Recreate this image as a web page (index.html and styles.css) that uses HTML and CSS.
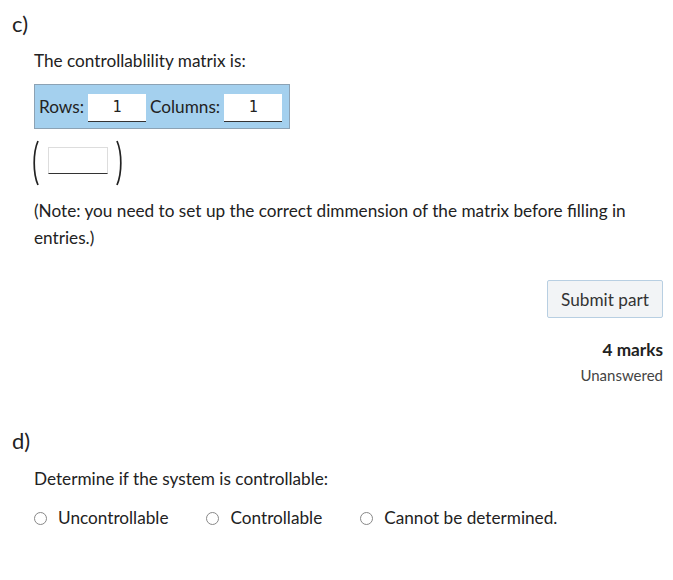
FILE: index.html
```html
<!DOCTYPE html>
<html>
<head>
<meta charset="utf-8">
<link rel="stylesheet" href="styles.css">
</head>
<body>
<section class="part">
  <h3 class="part-label">c)</h3>
  <div class="part-body">
    <p class="prompt">The controllablility matrix is:</p>
    <div class="dims">
      <span class="dim-label">Rows:</span>
      <input class="dim-input" type="text" value="1">
      <span class="dim-label">Columns:</span>
      <input class="dim-input" type="text" value="1">
    </div>
    <div class="matrix">
      <svg class="paren" width="8" height="46" viewBox="0 0 8 46"><path d="M6 1 C2.5 9 2.2 16 2.2 23 C2.2 30 2.5 37 6 45" fill="none" stroke="#222" stroke-width="1.7"/></svg>
      <input class="cell" type="text" value="">
      <svg class="paren" width="8" height="46" viewBox="0 0 8 46"><path d="M2 1 C5.5 9 5.8 16 5.8 23 C5.8 30 5.5 37 2 45" fill="none" stroke="#222" stroke-width="1.7"/></svg>
    </div>
    <p class="note">(Note: you need to set up the correct dimmension of the matrix before filling in entries.)</p>
  </div>
  <div class="submit-row">
    <button class="submit">Submit part</button>
    <div class="marks">4 marks</div>
    <div class="status">Unanswered</div>
  </div>
</section>
<section class="part part-d">
  <h3 class="part-label">d)</h3>
  <div class="part-body">
    <p class="prompt">Determine if the system is controllable:</p>
    <div class="choices">
      <label class="choice"><span class="radio"></span>Uncontrollable</label>
      <label class="choice"><span class="radio"></span>Controllable</label>
      <label class="choice"><span class="radio"></span>Cannot be determined.</label>
    </div>
  </div>
</section>
</body>
</html>
```

FILE: styles.css
```css
* { box-sizing: border-box; }
body {
  margin: 0;
  padding: 0 10px 0 12px;
  font-family: "Lato", "Liberation Sans", sans-serif;
  font-size: 17.2px;
  color: #222;
  background: #fff;
}
.part { display: flex; flex-direction: column; }
.part-label {
  margin: 11px 0 0 0;
  font-size: 22px;
  font-weight: 400;
  line-height: 26px;
}
.part-body { padding-left: 22px; }
.prompt { margin: 11px 0 0 0; line-height: 26px; }
.dims {
  margin-top: 10px;
  width: 256px;
  height: 45px;
  background: #a4d0ee;
  border: 1px solid #8ca2b4;
  display: flex;
  align-items: center;
  padding: 0 4px;
  gap: 4px;
}
.dim-input {
  width: 58px;
  height: 28px;
  margin-top: 2px;
  border: none;
  border-bottom: 1px solid #333;
  background: #fff;
  font-family: "DejaVu Sans Mono", monospace;
  font-size: 15px;
  text-align: center;
  padding: 0;
  color: #222;
}
.matrix {
  display: flex;
  align-items: center;
  height: 46px;
  margin-top: 11px;
}
.paren { display: block; }
.matrix .paren:first-child { margin-left: -2px; margin-right: 8px; }
.matrix .paren:last-child { margin-left: 7px; }
.cell {
  width: 60px;
  height: 27px;
  margin-bottom: 6px;
  border: 1px solid #ddd;
  border-bottom: 1px solid #333;
  background: #fff;
}
.note { margin: 11px 0 0 0; line-height: 27px; }
.submit-row {
  display: flex;
  flex-direction: column;
  align-items: flex-end;
  margin-top: 29px;
}
.submit {
  font-family: inherit;
  font-size: 17.2px;
  color: #333;
  width: 116px;
  height: 38px;
  background: #f2f4f6;
  border: 1px solid #b8cfe2;
  border-radius: 2px;
}
.marks { font-weight: 700; margin-top: 20px; line-height: 24px; }
.status { font-size: 15px; color: #444; margin-top: 3px; line-height: 20px; }
.part-d .part-label { margin-top: 43px; }
.part-d .prompt { margin-top: 12px; }
.choices { display: flex; margin-top: 13px; }
.choice { display: flex; align-items: center; margin-right: 38px; line-height: 26px; }
.radio {
  width: 13px; height: 13px;
  border: 1px solid #888;
  border-radius: 50%;
  margin-right: 11px;
}
```
